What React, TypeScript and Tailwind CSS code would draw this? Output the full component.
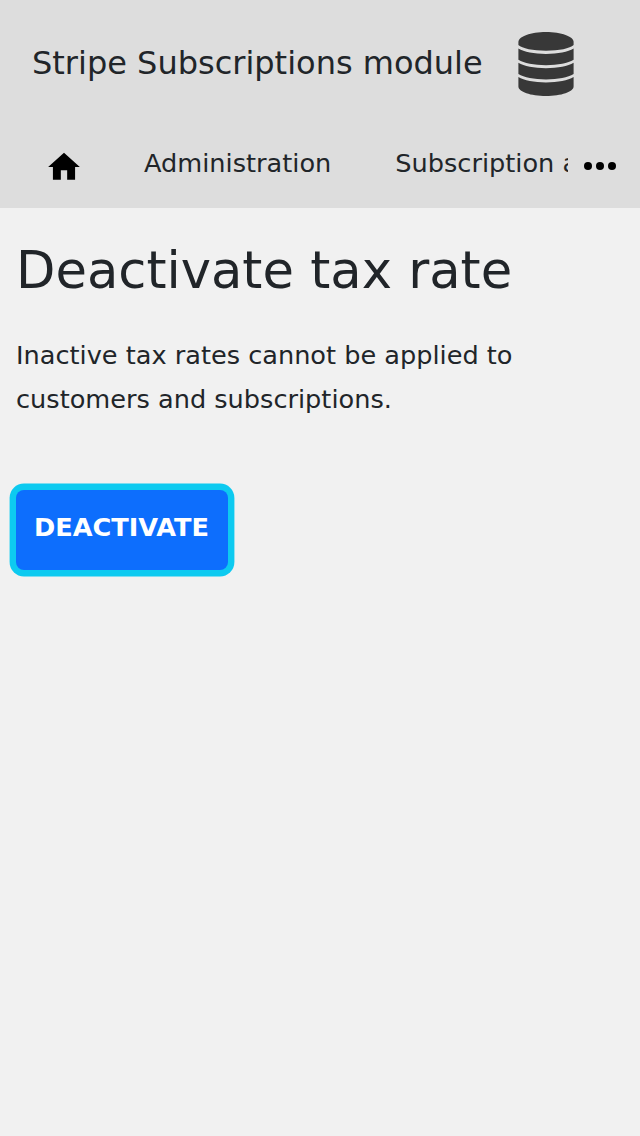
export default function App() {
  return (
    <div className="min-h-screen bg-[#f1f1f1] text-[#212529] font-['DejaVu_Sans',sans-serif]">
      <header className="h-[208px] bg-[#dddddd]">
        <div className="flex h-32 items-center pl-8">
          <span className="w-[486px] pb-0.5 text-[32px] leading-[48px] whitespace-nowrap">Stripe Subscriptions module</span>
          <svg className="h-16 w-14" viewBox="0 0 56 64" fill="#383838">
            <path d="M.4 10C.4 4.500 12.700 0 28 0s27.600 4.500 27.600 10v3C52 16.500 41 18.700 28 18.700S4 16.500.4 13z" />
            <path d="M.4 16.500C6 20 16 21.900 28 21.900s22-1.900 27.600-5.400v11.300C50 31.300 40 33.200 28 33.200S6 31.300.4 27.800z" />
            <path d="M.4 30.800C6 34.300 16 36.200 28 36.200s22-1.900 27.600-5.400v11.300C50 45.600 40 47.500 28 47.500S6 45.600.4 42.100z" />
            <path d="M.4 45.100C6 48.600 16 50.500 28 50.500s22-1.900 27.600-5.400V54.500C55.600 59.800 43.300 64 28 64S.4 59.800.4 54.500z" />
          </svg>
        </div>
        <nav className="flex h-20 items-start">
          <a className="w-32 pt-5 pl-[45px]">
            <svg className="h-[38px] w-[38px]" viewBox="0 0 24 24" fill="#000">
              <path d="M10 20v-6h4v6h5v-8h3L12 3 2 12h3v8z" />
            </svg>
          </a>
          <div className="flex w-[440px] gap-16 overflow-hidden pl-4 pt-4 text-[25.6px] leading-[38px] whitespace-nowrap">
            <a>Administration</a>
            <a>Subscription administration</a>
          </div>
          <div className="flex gap-1 pt-[34px] pl-4">
            <span className="size-2 rounded-full bg-black" />
            <span className="size-2 rounded-full bg-black" />
            <span className="size-2 rounded-full bg-black" />
          </div>
        </nav>
      </header>
      <main className="px-4 pt-8">
        <h1 className="text-[51.2px] leading-[61px] whitespace-nowrap">Deactivate tax rate</h1>
        <p className="mt-8 text-[25.6px] leading-[44px]">Inactive tax rates cannot be applied to<br />customers and subscriptions.</p>
        <button className="mt-[69px] h-20 w-[212px] rounded-lg bg-[#0d6efd] pr-px pb-1.5 text-[25.6px] font-bold text-white shadow-[0_0_0_6.4px_#0dcaf0]">DEACTIVATE</button>
      </main>
    </div>
  );
}
